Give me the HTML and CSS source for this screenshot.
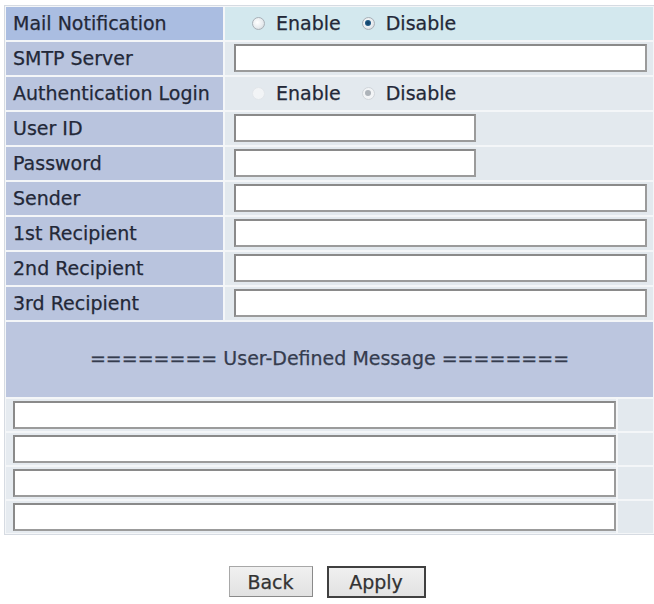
FILE: index.html
```html
<!DOCTYPE html>
<html>
<head>
<meta charset="utf-8">
<link rel="stylesheet" href="styles.css">
</head>
<body>
<div class="page">
  <div class="panel">
    <div class="row">
      <div class="label label-hl">Mail Notification</div>
      <div class="value value-hl">
        <span class="opt"><span class="radio"></span>Enable</span>
        <span class="opt"><span class="radio checked"></span>Disable</span>
      </div>
    </div>
    <div class="row">
      <div class="label">SMTP Server</div>
      <div class="value"><span class="input wide"></span></div>
    </div>
    <div class="row">
      <div class="label">Authentication Login</div>
      <div class="value">
        <span class="opt"><span class="radio disabled"></span>Enable</span>
        <span class="opt"><span class="radio disabled checked"></span>Disable</span>
      </div>
    </div>
    <div class="row">
      <div class="label">User ID</div>
      <div class="value"><span class="input short"></span></div>
    </div>
    <div class="row">
      <div class="label">Password</div>
      <div class="value"><span class="input short"></span></div>
    </div>
    <div class="row">
      <div class="label">Sender</div>
      <div class="value"><span class="input wide"></span></div>
    </div>
    <div class="row">
      <div class="label">1st Recipient</div>
      <div class="value"><span class="input wide"></span></div>
    </div>
    <div class="row">
      <div class="label">2nd Recipient</div>
      <div class="value"><span class="input wide"></span></div>
    </div>
    <div class="row">
      <div class="label">3rd Recipient</div>
      <div class="value"><span class="input wide"></span></div>
    </div>
    <div class="header">======== User-Defined Message ========</div>
    <div class="msg-row">
      <div class="msg-cell"><span class="input msg"></span></div>
      <div class="msg-side"></div>
    </div>
    <div class="msg-row">
      <div class="msg-cell"><span class="input msg"></span></div>
      <div class="msg-side"></div>
    </div>
    <div class="msg-row">
      <div class="msg-cell"><span class="input msg"></span></div>
      <div class="msg-side"></div>
    </div>
    <div class="msg-row">
      <div class="msg-cell"><span class="input msg"></span></div>
      <div class="msg-side"></div>
    </div>
  </div>
  <div class="buttons">
    <button class="btn back">Back</button>
    <button class="btn apply">Apply</button>
  </div>
</div>
</body>
</html>
```
FILE: styles.css
```css
html, body {
  margin: 0;
  padding: 0;
  background: #ffffff;
}
body {
  font-family: "DejaVu Sans", Verdana, sans-serif;
  font-size: 19px;
  color: #232838;
}
.page {
  padding: 5px 0 0 4px;
}
.panel {
  width: 647px;
  border: 1px solid #d6dbe2;
  padding: 1px;
  display: flex;
  flex-direction: column;
  gap: 2px;
  background: #f4f6f8;
}
.row {
  display: grid;
  grid-template-columns: 217px 1fr;
  gap: 2px;
  height: 33px;
}
.label {
  background: #b9c4de;
  padding-left: 7px;
  padding-bottom: 1px;
  display: flex;
  align-items: center;
  white-space: nowrap;
  -webkit-text-stroke: 0.25px #232838;
}
.label-hl {
  background: #aabde1;
}
.value {
  background: #e3e9ee;
  display: flex;
  align-items: center;
  padding-left: 9px;
  padding-bottom: 1px;
  -webkit-text-stroke: 0.25px #232838;
}
.value-hl {
  background: #d3e8ee;
}
.opt {
  display: inline-flex;
  align-items: center;
  margin-left: 18px;
  margin-right: 2px;
}
.opt + .opt {
  margin-left: 19px;
}
.radio {
  width: 13px;
  height: 13px;
  border-radius: 50%;
  box-sizing: border-box;
  border: 1px solid #a9b0b7;
  background: radial-gradient(circle at 40% 40%, #ffffff 0%, #e8ecef 55%, #c9ced3 100%);
  margin-right: 11px;
  position: relative;
}
.radio.checked::after {
  content: "";
  position: absolute;
  left: 2.5px;
  top: 2.5px;
  width: 6px;
  height: 6px;
  border-radius: 50%;
  background: radial-gradient(circle, #0f3d63 0%, #2a6a98 100%);
}
.radio.disabled {
  border-color: #e2e6ea;
  background: #f2f4f6;
}
.radio.disabled.checked {
  border-color: #d0d5da;
}
.radio.disabled.checked::after {
  background: #adb3b9;
}
.input {
  display: block;
  box-sizing: border-box;
  height: 28px;
  background: #ffffff;
  border: 2px solid #9b9b9b;
  border-top-color: #8a8a8a;
  border-left-color: #8a8a8a;
}
.input.wide {
  width: 413px;
}
.input.short {
  width: 242px;
}
.header {
  height: 75px;
  background: #bcc6df;
  display: flex;
  align-items: center;
  justify-content: center;
  padding-bottom: 3px;
  box-sizing: border-box;
  color: #353c4e;
  -webkit-text-stroke: 0.25px #353c4e;
}
.msg-row {
  display: grid;
  grid-template-columns: 610px 1fr;
  gap: 2px;
  height: 32px;
}
.msg-cell {
  background: #e6ebf0;
  display: flex;
  align-items: center;
  padding-left: 7px;
}
.input.msg {
  width: 603px;
}
.msg-side {
  background: #e3e9ee;
}
.buttons {
  display: flex;
  justify-content: center;
  gap: 14px;
  margin-top: 31px;
  padding-right: 4px;
}
.btn {
  font-family: "DejaVu Sans", Verdana, sans-serif;
  font-size: 19px;
  color: #333333;
  -webkit-text-stroke: 0.25px #333333;
  background: linear-gradient(#f0f0f0, #e2e2e2);
  height: 31px;
  padding: 0;
  border: 1px solid #a8a8a8;
  border-right-color: #8a8a8a;
  border-bottom-color: #8a8a8a;
}
.btn.back {
  width: 84px;
}
.btn.apply {
  width: 99px;
  height: 32px;
  border: 2px solid #404040;
}
```
